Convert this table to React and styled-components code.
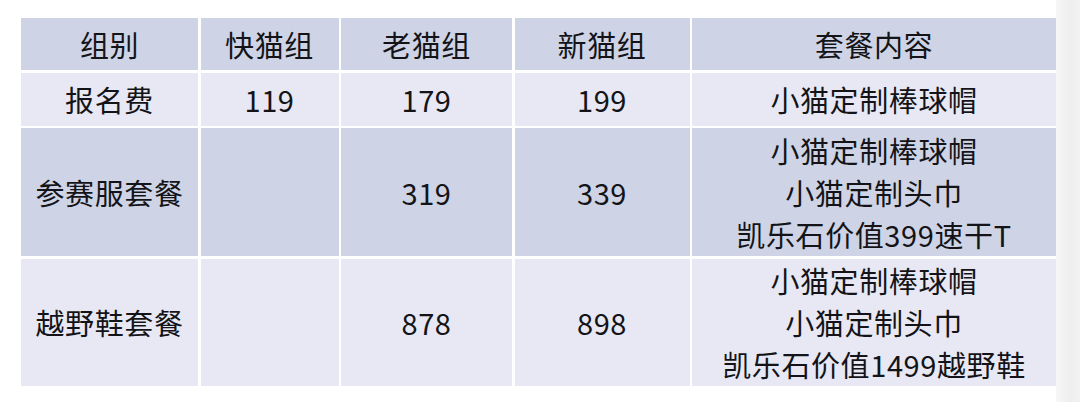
import React from "react";
import styled, { createGlobalStyle } from "styled-components";

const GlobalStyle = createGlobalStyle`
  html, body {
    margin: 0;
    padding: 0;
    background: #ffffff;
  }
  body {
    font-family: "Noto Sans CJK SC", "Noto Sans", sans-serif;
  }
`;

const Page = styled.div`
  display: flex;
  width: 1080px;
  height: 402px;
  overflow: hidden;
`;

const Main = styled.div`
  flex: 1;
  padding: 18px 0 0 21px;
`;

const Edge = styled.div`
  width: 24px;
  background: linear-gradient(to right, #f7f7f7, #eeeeee 60%, #f2f2f2);
`;

const Grid = styled.div`
  display: grid;
  grid-template-columns: 177px 138px 171px 175px 364px;
  grid-template-rows: 52px 53px 128px 127px;
  gap: 2.5px;
  width: 1035px;
`;

const Cell = styled.div`
  display: flex;
  flex-direction: column;
  align-items: center;
  justify-content: center;
  background: ${(p) => (p.$dark ? "#ced4e6" : "#e7e8f3")};
  color: #141418;
  font-size: 29px;
  letter-spacing: 0.6px;
  line-height: 42px;
  text-align: center;
  white-space: nowrap;
`;

const rows = [
  { dark: true, cells: ["组别", "快猫组", "老猫组", "新猫组", ["套餐内容"]] },
  { dark: false, cells: ["报名费", "119", "179", "199", ["小猫定制棒球帽"]] },
  {
    dark: true,
    cells: [
      "参赛服套餐",
      "",
      "319",
      "339",
      ["小猫定制棒球帽", "小猫定制头巾", "凯乐石价值399速干T"],
    ],
  },
  {
    dark: false,
    cells: [
      "越野鞋套餐",
      "",
      "878",
      "898",
      ["小猫定制棒球帽", "小猫定制头巾", "凯乐石价值1499越野鞋"],
    ],
  },
];

export default function App() {
  return (
    <Page>
      <GlobalStyle />
      <Main>
        <Grid>
          {rows.map((row, r) =>
            row.cells.map((c, i) => (
              <Cell key={r + "-" + i} $dark={row.dark}>
                {Array.isArray(c) ? c.map((line) => <span key={line}>{line}</span>) : c}
              </Cell>
            ))
          )}
        </Grid>
      </Main>
      <Edge />
    </Page>
  );
}
